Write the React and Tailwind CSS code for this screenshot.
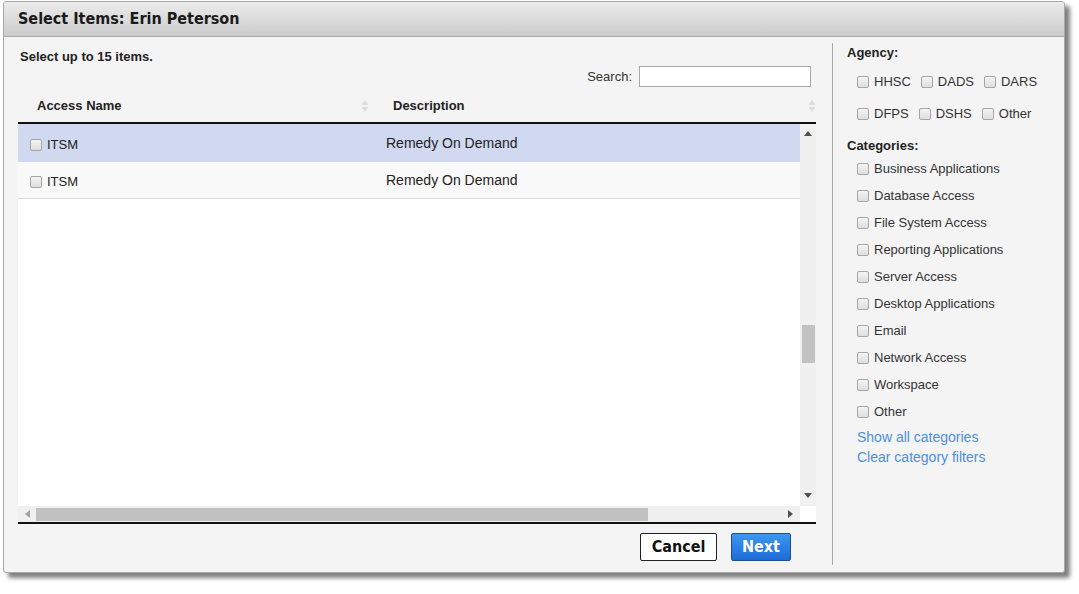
import React from "react";

const Box = () => (
  <span className="inline-block w-[12px] h-[12px] shrink-0 rounded-[2px] border border-[#a6a6a6] bg-gradient-to-b from-[#f4f4f4] to-[#dedede]" />
);

const SortIcon = () => (
  <svg width="8" height="14" viewBox="0 0 8 14" className="shrink-0">
    <path d="M4 1 L7.5 6 L0.5 6 Z" fill="#dcdcdc" />
    <path d="M4 13 L7.5 8 L0.5 8 Z" fill="#dcdcdc" />
  </svg>
);

const rows = [
  { name: "ITSM", desc: "Remedy On Demand", selected: true },
  { name: "ITSM", desc: "Remedy On Demand", selected: false },
];

const agencies = [
  ["HHSC", "DADS", "DARS"],
  ["DFPS", "DSHS", "Other"],
];

const categories = [
  "Business Applications",
  "Database Access",
  "File System Access",
  "Reporting Applications",
  "Server Access",
  "Desktop Applications",
  "Email",
  "Network Access",
  "Workspace",
  "Other",
];

export default function App() {
  return (
    <div className="w-[1079px] h-[594px] bg-white relative font-['Liberation_Sans',Arial,sans-serif] text-[13px] text-[#222]">
      <div className="absolute left-[3px] top-[1px] w-[1062px] h-[572px] flex flex-col border border-[#a8a8a8] rounded-[3px] bg-[#f4f4f4] shadow-[5px_5px_4px_rgba(0,0,0,0.5)] overflow-hidden">
        {/* title bar */}
        <div className="h-[35px] shrink-0 flex items-center pl-[14px] bg-gradient-to-b from-[#ececec] to-[#cbcbcb] border-b border-[#a8a8a8]">
          <span className="font-['DejaVu_Sans_Condensed',Tahoma,sans-serif] font-bold text-[16px] text-[#1a1a1a]">
            Select Items: Erin Peterson
          </span>
        </div>

        <div className="flex flex-1 min-h-0">
          {/* left column */}
          <div className="w-[828px] shrink-0 pl-[14px] pr-[16px] pt-[12px] flex flex-col">
            <div className="h-[16px] leading-[16px] font-bold pl-[2px]">Select up to 15 items.</div>
            <div className="h-[21px] mt-[1px] flex items-center justify-end pr-[5px]">
              <span className="text-[#333] mr-[7px]">Search:</span>
              <input className="w-[172px] h-[21px] bg-white border border-[#a9a9a9] outline-none" />
            </div>

            {/* table header */}
            <div className="h-[34px] mt-[3px] flex items-center border-b-2 border-[#111]">
              <div className="w-[357px] pl-[19px] pr-[6px] flex items-center justify-between font-bold">
                <span>Access Name</span>
                <SortIcon />
              </div>
              <div className="flex-1 pl-[18px] flex items-center justify-between font-bold">
                <span>Description</span>
                <SortIcon />
              </div>
            </div>

            {/* table body */}
            <div className="h-[382px] flex">
              <div className="flex-1 bg-white">
                {rows.map((r, i) => (
                  <div
                    key={i}
                    className={
                      r.selected
                        ? "h-[38px] flex items-center bg-[#d0d9ef]"
                        : "h-[37px] flex items-center bg-[#f9f9f9] border-b border-[#dddddd]"
                    }
                  >
                    <div className="w-[357px] pl-[12px] flex items-center gap-[5px] pt-[4px]">
                      <Box />
                      <span className="text-[13px]">{r.name}</span>
                    </div>
                    <div className="flex-1 pl-[11px] text-[14px]">{r.desc}</div>
                  </div>
                ))}
              </div>
              <div className="w-[16px] bg-[#f0f0f0] flex flex-col items-center">
                <svg width="8" height="5" viewBox="0 0 8 5" className="mt-[7px]">
                  <path d="M4 0 L8 5 L0 5 Z" fill="#505050" />
                </svg>
                <div className="w-[13px] h-[38px] bg-[#c1c1c1] mt-[189px]" />
                <div className="flex-1" />
                <svg width="8" height="5" viewBox="0 0 8 5" className="mb-[8px]">
                  <path d="M0 0 L8 0 L4 5 Z" fill="#505050" />
                </svg>
              </div>
            </div>

            {/* horizontal scrollbar */}
            <div className="h-[16px] flex">
              <div className="flex-1 bg-[#f0f0f0] flex items-center">
                <svg width="5" height="8" viewBox="0 0 5 8" className="ml-[7px]">
                  <path d="M5 0 L5 8 L0 4 Z" fill="#a3a3a3" />
                </svg>
                <div className="w-[612px] h-[13px] bg-[#c1c1c1] ml-[6px]" />
                <div className="flex-1" />
                <svg width="5" height="8" viewBox="0 0 5 8" className="mr-[7px]">
                  <path d="M0 0 L5 4 L0 8 Z" fill="#505050" />
                </svg>
              </div>
              <div className="w-[16px] bg-white" />
            </div>
            <div className="h-[2px] bg-[#111]" />

            {/* buttons */}
            <div className="flex justify-end gap-[14px] pr-[25px] mt-[9px]">
              <button className="w-[77px] h-[28px] bg-white border border-[#222] rounded-[2px] font-['DejaVu_Sans_Condensed',Tahoma,sans-serif] font-bold text-[16px] text-[#111]">
                Cancel
              </button>
              <button className="w-[60px] h-[28px] bg-gradient-to-b from-[#3f97ef] to-[#1d6ad8] border border-[#1c4f94] rounded-[2px] font-['DejaVu_Sans_Condensed',Tahoma,sans-serif] font-bold text-[16px] text-white">
                Next
              </button>
            </div>
          </div>

          {/* right column */}
          <div className="flex-1 py-[6px] pb-[7px]">
            <div className="h-full border-l border-[#a8a8a8] pl-[14px] pt-[2px]">
              <div className="h-[16px] leading-[16px] font-bold">Agency:</div>
              <div className="mt-[5px]">
                {agencies.map((row, i) => (
                  <div key={i} className="h-[32px] flex items-center pl-[10px] gap-[10px]">
                    {row.map((a) => (
                      <label key={a} className="flex items-center gap-[5px] text-[13px] text-[#333]">
                        <Box />
                        <span>{a}</span>
                      </label>
                    ))}
                  </div>
                ))}
              </div>
              <div className="h-[16px] leading-[16px] font-bold mt-[8px]">Categories:</div>
              <div className="mt-[1px]">
                {categories.map((c) => (
                  <label key={c} className="h-[27px] flex items-center pl-[10px] gap-[5px] text-[13px] text-[#333]">
                    <Box />
                    <span>{c}</span>
                  </label>
                ))}
              </div>
              <div className="pl-[10px] text-[14px] text-[#4a90dc] leading-[20px] mt-[2px]">
                <div>Show all categories</div>
                <div>Clear category filters</div>
              </div>
            </div>
          </div>
        </div>
      </div>
    </div>
  );
}
